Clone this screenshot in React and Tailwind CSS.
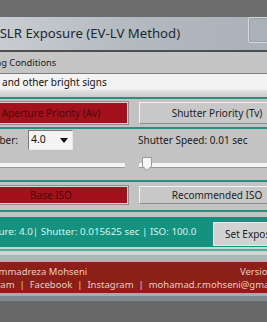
export default function App() {
  const red =
    "flex items-center justify-center bg-[#a3121c] border border-[#d6d6d6] shadow-[0_0_0_1px_#8c8c8c] text-[10px] text-[#4a0808] whitespace-nowrap";
  const gray =
    "flex items-center justify-center bg-[#c8c8c8] border border-t-[#f2f2f2] border-l-[#f2f2f2] border-r-[#8a8a8a] border-b-[#8a8a8a] text-[10px] text-[#1e1e1e] whitespace-nowrap";
  return (
    <div className="w-[267px] h-[322px] overflow-hidden bg-[#686868] font-['Noto_Sans',sans-serif]">
      <div className="ml-[-30px] w-[330px] flex flex-col">
        <div className="h-[17px] bg-[#6c6c6c]" />
        {/* title bar */}
        <div className="h-[33px] flex items-start bg-gradient-to-r from-[#cdd1d5] via-[#b3b9bf] to-[#a8afb7]">
          <div className="pl-[20px] pt-[7px] text-[13.2px] text-[#1c2833] whitespace-nowrap">
            DSLR Exposure (EV-LV Method)
          </div>
          <div className="ml-auto mr-[22px] w-[30px] h-[26px] shrink-0 border border-[#d4d8dc] rounded-[2px] shadow-[inset_0_0_0_1px_#9aa1a8]" />
        </div>
        <div className="h-[2px] bg-[#4e4e4e]" />
        {/* group header */}
        <div className="h-[21px] bg-[#c5c5c5] flex items-center pl-[1px] text-[9.3px] text-[#1a1a1a] whitespace-nowrap">
          Lighting Conditions
        </div>
        <div className="h-px bg-[#7c7c7c]" />
        <div className="h-[16px] bg-[#f3f3f3] flex items-center pl-[4px] text-[10px] text-[#111] whitespace-nowrap">
          Neon and other bright signs
        </div>
        <div className="h-[7px] bg-gradient-to-b from-[#e2e2e2] to-[#cbcbcb]" />
        <div className="h-[2px] bg-[#2a8f80]" />
        {/* priority buttons */}
        <div className="bg-[#c3c3c3] grid grid-cols-[154px_156px] gap-x-[11px] px-[4px] py-[3px]">
          <div className={red + " h-[22px]"}>Aperture Priority (Av)</div>
          <div className={gray + " h-[22px]"}>Shutter Priority (Tv)</div>
        </div>
        <div className="h-[2px] bg-[#2a8f80]" />
        {/* controls */}
        <div className="h-[51px] bg-[#c3c3c3] grid grid-cols-[154px_156px] gap-x-[11px] px-[4px] pt-[1px]">
          <div className="flex flex-col">
            <div className="h-[20px] flex items-center justify-end">
              <span className="text-[10px] text-[#1a1a1a] whitespace-nowrap mr-[10px]">Number:</span>
              <div className="w-[45px] h-[20px] shrink-0 bg-[#f4f4f4] border border-t-[#7a7a7a] border-l-[#7a7a7a] border-r-[#e8e8e8] border-b-[#e8e8e8] flex items-center justify-between pl-[2px] pr-[4px] mr-[55px]">
                <span className="text-[10.5px] text-[#111]">4.0</span>
                <svg width="8" height="5" viewBox="0 0 8 5">
                  <path d="M0 0H8L4 5Z" fill="#111" />
                </svg>
              </div>
            </div>
            <div className="mt-[13px] h-[4px] bg-[#f4f4f4] mr-[3px] shadow-[0_1px_0_#9a9a9a]" />
          </div>
          <div className="flex flex-col">
            <div className="h-[20px] flex items-center -ml-[1px] text-[10px] text-[#1a1a1a] whitespace-nowrap">
              Shutter Speed: 0.01 sec
            </div>
            <div className="mt-[13px] flex items-center">
              <div className="relative w-full h-[4px] bg-[#f4f4f4] shadow-[0_1px_0_#9a9a9a]">
                <svg width="10" height="14" viewBox="0 0 10 14" className="absolute left-[3px] top-[-6px]">
                  <path d="M0.5 0.5H9.5V9L5 13.5L0.5 9Z" fill="#f6f6f6" stroke="#9a9a9a" />
                </svg>
              </div>
            </div>
          </div>
        </div>
        <div className="h-[2px] bg-[#2a8f80]" />
        {/* ISO buttons */}
        <div className="bg-[#c3c3c3] grid grid-cols-[154px_156px] gap-x-[11px] px-[4px] pt-[4px] pb-[6px]">
          <div className={red + " h-[18px]"}>Base ISO</div>
          <div className={gray + " h-[18px]"}>Recommended ISO</div>
        </div>
        <div className="h-[2px] bg-[#2a8f80]" />
        <div className="h-[5px] bg-[#c3c3c3]" />
        {/* status */}
        <div className="h-[30px] bg-[#14917f] flex items-center">
          <div className="w-[243px] shrink-0 pl-[3px] overflow-hidden text-[9.8px] text-[#dff2ee] whitespace-nowrap">
            Aperture: 4.0| Shutter: 0.015625 sec | ISO: 100.0
          </div>
          <div className="w-[87px] shrink-0 h-[24px] mt-[4px] bg-[#d2d2d2] border border-[#eaeaea] flex items-center pl-[11px] text-[10px] text-[#1a1a1a] whitespace-nowrap">
            Set Exposure
          </div>
        </div>
        <div className="h-[2px] bg-[#c2d9d5]" />
        <div className="h-[2px] bg-[#5aa89c]" />
        <div className="h-[4px] bg-[#cfd6d5]" />
        <div className="h-[7px] bg-[#b3b3b3]" />
        {/* footer */}
        <div className="h-[31px] bg-[#8c1f18] flex flex-col justify-center pl-[3px] text-[9.5px] leading-[13px] text-[#e9cdc6] whitespace-nowrap">
          <div className="flex">
            <span>Mohammadreza Mohseni</span>
            <span className="ml-auto pr-[0px] w-[60px] shrink-0">Version 1.0</span>
          </div>
          <div>
            Telegram &nbsp;|&nbsp; Facebook &nbsp;|&nbsp; Instagram &nbsp;|&nbsp; mohamad.r.mohseni@gmail.com
          </div>
        </div>
        <div className="h-[3px] bg-[#a3abb3]" />
        <div className="h-[5px] bg-[#7f878f]" />
        <div className="h-[30px] bg-[#686868]" />
      </div>
    </div>
  );
}
